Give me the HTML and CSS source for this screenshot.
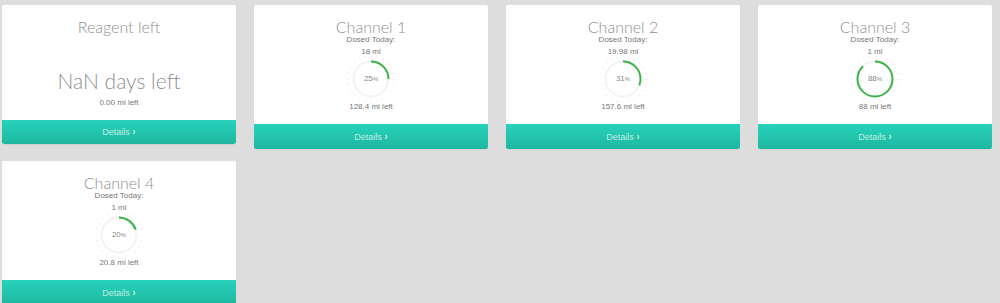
FILE: index.html
```html
<!DOCTYPE html>
<html>
<head>
<meta charset="utf-8">
<link rel="stylesheet" href="styles.css">
</head>
<body>
<div class="grid">
  <div class="card reagent">
    <div class="title">Reagent left</div>
    <div class="big">NaN days left</div>
    <div class="line left-line">0.00 ml left</div>
    <div class="footer">Details <span class="chev">&#x203A;</span></div>
  </div>

  <div class="card channel">
    <div class="title">Channel 1</div>
    <div class="line">Dosed Today:</div>
    <div class="line">18 ml</div>
    <div class="gauge">
      <svg viewBox="0 0 50 50" width="50" height="50">
        <circle class="ticks" cx="25" cy="25" r="23" pathLength="120"/>
        <circle class="track" cx="25" cy="25" r="17.5"/>
        <circle class="arc" cx="25" cy="25" r="17.5" pathLength="100" stroke-dasharray="25 100"/>
      </svg>
      <div class="pct">25<span>%</span></div>
    </div>
    <div class="line">128.4 ml left</div>
    <div class="footer">Details <span class="chev">&#x203A;</span></div>
  </div>

  <div class="card channel">
    <div class="title">Channel 2</div>
    <div class="line">Dosed Today:</div>
    <div class="line">19.98 ml</div>
    <div class="gauge">
      <svg viewBox="0 0 50 50" width="50" height="50">
        <circle class="ticks" cx="25" cy="25" r="23" pathLength="120"/>
        <circle class="track" cx="25" cy="25" r="17.5"/>
        <circle class="arc" cx="25" cy="25" r="17.5" pathLength="100" stroke-dasharray="31 100"/>
      </svg>
      <div class="pct">31<span>%</span></div>
    </div>
    <div class="line">157.6 ml left</div>
    <div class="footer">Details <span class="chev">&#x203A;</span></div>
  </div>

  <div class="card channel">
    <div class="title">Channel 3</div>
    <div class="line">Dosed Today:</div>
    <div class="line">1 ml</div>
    <div class="gauge">
      <svg viewBox="0 0 50 50" width="50" height="50">
        <circle class="ticks" cx="25" cy="25" r="23" pathLength="120"/>
        <circle class="track" cx="25" cy="25" r="17.5"/>
        <circle class="arc" cx="25" cy="25" r="17.5" pathLength="100" stroke-dasharray="88 100"/>
      </svg>
      <div class="pct">88<span>%</span></div>
    </div>
    <div class="line">88 ml left</div>
    <div class="footer">Details <span class="chev">&#x203A;</span></div>
  </div>

  <div class="card channel">
    <div class="title">Channel 4</div>
    <div class="line">Dosed Today:</div>
    <div class="line">1 ml</div>
    <div class="gauge">
      <svg viewBox="0 0 50 50" width="50" height="50">
        <circle class="ticks" cx="25" cy="25" r="23" pathLength="120"/>
        <circle class="track" cx="25" cy="25" r="17.5"/>
        <circle class="arc" cx="25" cy="25" r="17.5" pathLength="100" stroke-dasharray="20 100"/>
      </svg>
      <div class="pct">20<span>%</span></div>
    </div>
    <div class="line">20.8 ml left</div>
    <div class="footer">Details <span class="chev">&#x203A;</span></div>
  </div>
</div>
</body>
</html>
```

FILE: styles.css
```css
html, body {
  margin: 0;
  padding: 0;
  background: #dddddd;
  height: 303px;
  overflow: hidden;
}

.grid {
  display: grid;
  grid-template-columns: repeat(4, 234px);
  column-gap: 18px;
  row-gap: 12px;
  align-items: start;
  padding: 5px 0 0 2px;
}

.card {
  background: #ffffff;
  border-radius: 2px;
  overflow: hidden;
  display: flex;
  flex-direction: column;
  align-items: center;
  text-align: center;
  box-shadow: 0 1px 1px rgba(0,0,0,0.05);
}

.title {
  font-family: Lato, "Open Sans", sans-serif;
  font-weight: 300;
  font-size: 16px;
  line-height: 16px;
  color: #8f8f8f;
  margin-top: 14px;
  height: 16px;
}

.line {
  font-family: "Liberation Sans", Arial, sans-serif;
  font-size: 8px;
  line-height: 11px;
  height: 11px;
  color: #777777;
}

.channel .title + .line {
  margin-top: -1px;
}

.channel .title + .line + .line {
  margin-top: 1px;
}

.big {
  font-family: Lato, "Open Sans", sans-serif;
  font-weight: 300;
  font-size: 21px;
  line-height: 24px;
  color: #8f8f8f;
  margin-top: 34px;
}

.reagent .left-line {
  margin-top: 4px;
}

.gauge {
  position: relative;
  width: 50px;
  height: 44px;
}

.gauge svg {
  position: absolute;
  left: 0;
  top: -3px;
  overflow: visible;
}

.ticks {
  fill: none;
  stroke: #e8e8e8;
  stroke-width: 3;
  stroke-dasharray: 0.5 4.5;
}

.track {
  fill: none;
  stroke: #f3f3f3;
  stroke-width: 2;
}

.arc {
  fill: none;
  stroke: #3cb449;
  stroke-width: 2;
  transform: rotate(-90deg);
  transform-origin: 25px 25px;
}

.pct {
  position: absolute;
  left: 0;
  right: 0;
  top: 17px;
  font-family: "Liberation Sans", Arial, sans-serif;
  font-size: 8px;
  line-height: 10px;
  color: #888888;
}

.pct span {
  font-size: 6px;
}

.footer {
  align-self: stretch;
  margin-top: 12px;
  height: 25px;
  line-height: 25px;
  background: linear-gradient(to bottom, #27d2bb, #1fb7a0);
  font-family: "Liberation Sans", Arial, sans-serif;
  font-size: 9px;
  color: rgba(255,255,255,0.72);
}

.reagent .footer {
  height: 24px;
  line-height: 24px;
  margin-top: 12px;
}

.chev {
  font-weight: bold;
  font-size: 10px;
}
```
